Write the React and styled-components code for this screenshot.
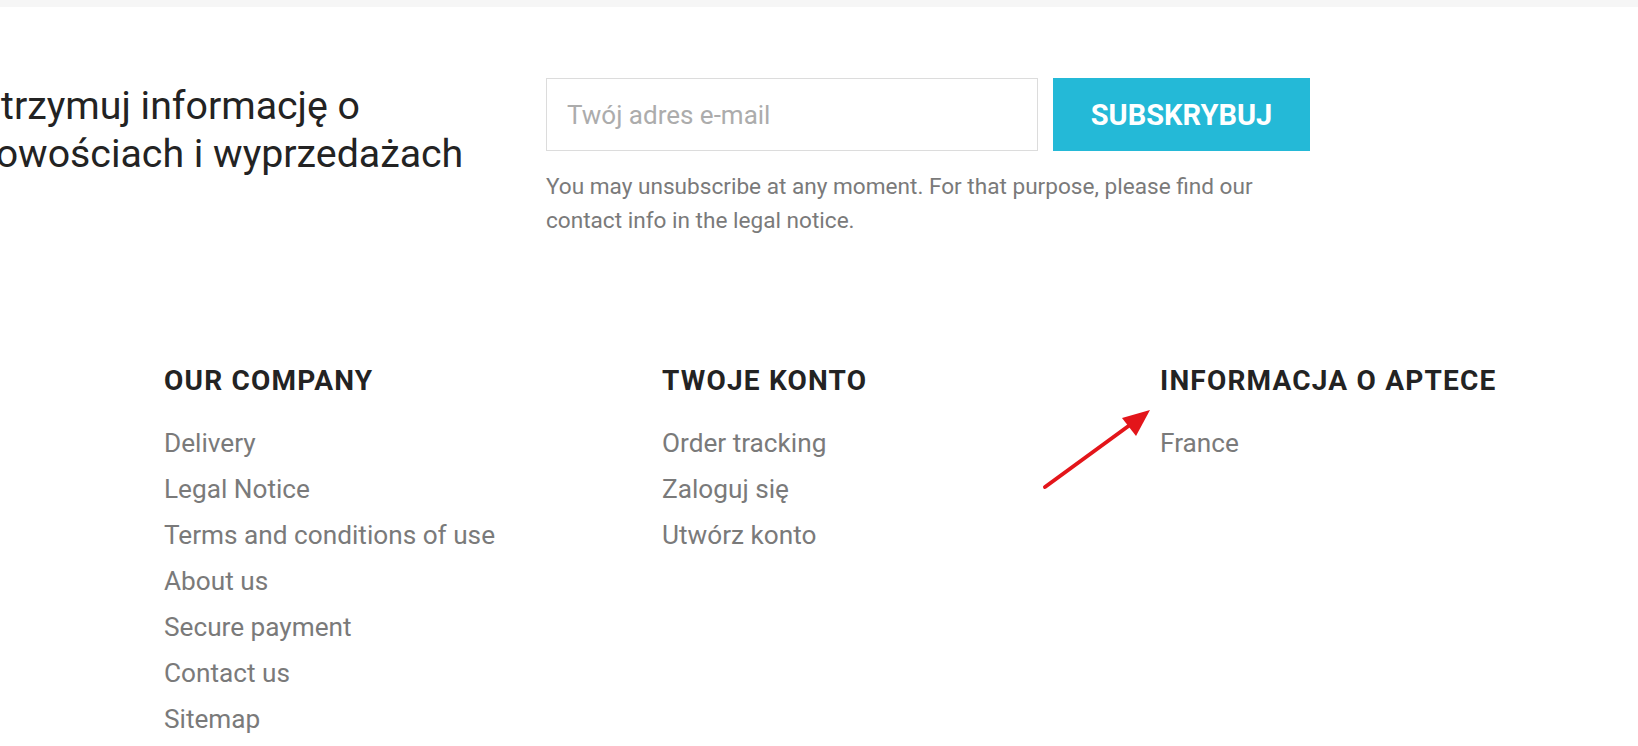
import React from "react";
import styled, { createGlobalStyle } from "styled-components";

const GlobalStyle = createGlobalStyle`
    body {
        margin: 0;
        background: #fff;
        font-family: Roboto, "Liberation Sans", sans-serif;
        overflow: hidden;
    }
`;

const columns = [
    {
        title: "OUR COMPANY",
        links: [
            "Delivery",
            "Legal Notice",
            "Terms and conditions of use",
            "About us",
            "Secure payment",
            "Contact us",
            "Sitemap",
        ],
    },
    {
        title: "TWOJE KONTO",
        links: ["Order tracking", "Zaloguj się", "Utwórz konto"],
    },
    {
        title: "INFORMACJA O APTECE",
        links: ["France"],
    },
];

function App() {
    return (
        <>
            <GlobalStyle />
            <Page>
                <TopBar />
                <Newsletter>
                    <Heading>
                        Otrzymuj informację o
                        <br />
                        nowościach i wyprzedażach
                    </Heading>
                    <Form>
                        <FormRow>
                            <EmailInput placeholder="Twój adres e-mail" />
                            <SubmitBtn>SUBSKRYBUJ</SubmitBtn>
                        </FormRow>
                        <Note>
                            You may unsubscribe at any moment. For that purpose, please find our
                            <br />
                            contact info in the legal notice.
                        </Note>
                    </Form>
                </Newsletter>
                <Footer>
                    {columns.map((col) => (
                        <Column key={col.title}>
                            <ColTitle>{col.title}</ColTitle>
                            <LinkList>
                                {col.links.map((l) => (
                                    <LinkItem key={l}>{l}</LinkItem>
                                ))}
                            </LinkList>
                        </Column>
                    ))}
                </Footer>
                <Arrow width="120" height="90" viewBox="0 0 120 90">
                    <line x1="5" y1="82" x2="94" y2="17" stroke="#e3151a" strokeWidth="4" strokeLinecap="round" />
                    <polygon points="110,5 82,13 96,31" fill="#e3151a" />
                </Arrow>
            </Page>
        </>
    );
}
export default App;

const Page = styled.div`
    position: relative;
    width: 1638px;
    height: 746px;
    overflow: hidden;
`;

const TopBar = styled.div`
    height: 7px;
    background: #f6f6f6;
`;

const Newsletter = styled.section`
    display: flex;
    align-items: flex-start;
    padding-top: 71px;
`;

const Heading = styled.h2`
    width: 572px;
    margin: 4px 0 0 -26px;
    font-size: 39.3px;
    font-weight: 400;
    line-height: 48px;
    color: #232323;
`;

const Form = styled.div`
    display: flex;
    flex-direction: column;
`;

const FormRow = styled.div`
    display: flex;
    gap: 15px;
`;

const EmailInput = styled.input`
    box-sizing: border-box;
    width: 492px;
    height: 73px;
    padding: 0 20px;
    border: 1px solid #dcdcdc;
    font-family: inherit;
    font-size: 26px;
    color: #232323;
    outline: none;
    &::placeholder {
        color: #acacac;
    }
`;

const SubmitBtn = styled.button`
    width: 257px;
    height: 73px;
    border: none;
    background: #24b9d7;
    color: #fff;
    font-family: inherit;
    font-size: 29px;
    font-weight: 700;
`;

const Note = styled.p`
    margin: 19px 0 0;
    font-size: 22.6px;
    line-height: 34px;
    color: #7a7a7a;
`;

const Footer = styled.footer`
    display: grid;
    grid-template-columns: repeat(3, 498px);
    padding: 127px 0 0 164px;
`;

const Column = styled.div`
    display: flex;
    flex-direction: column;
`;

const ColTitle = styled.h4`
    margin: 0;
    font-size: 28px;
    font-weight: 700;
    letter-spacing: 1.2px;
    line-height: 32px;
    color: #232323;
`;

const LinkList = styled.ul`
    list-style: none;
    margin: 23px 0 0;
    padding: 0;
`;

const LinkItem = styled.li`
    font-size: 26.2px;
    line-height: 46px;
    color: #7a7a7a;
`;

const Arrow = styled.svg`
    position: absolute;
    left: 1040px;
    top: 405px;
`;
